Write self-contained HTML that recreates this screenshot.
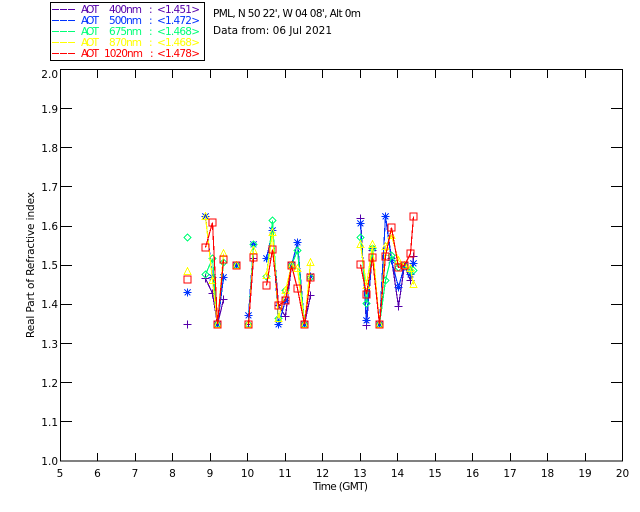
<!DOCTYPE html>
<html>
<head>
<meta charset="utf-8">
<style>
html,body{margin:0;padding:0;background:#fff;width:640px;height:512px;overflow:hidden}
svg{display:block}
text{font-family:"DejaVu Sans","Liberation Sans",sans-serif;font-size:10.5px;fill:#000}
</style>
</head>
<body>
<svg id="s" xmlns="http://www.w3.org/2000/svg" width="640" height="512" viewBox="0 0 640 512">
<g shape-rendering="crispEdges" fill="none" stroke="#000" stroke-width="1">
<rect x="50.5" y="2.5" width="154" height="58"/>
<rect x="60.5" y="69.5" width="562" height="391.5"/>
<path id="ticks" d=""/>
</g>
<g shape-rendering="crispEdges" fill="none" stroke-width="1" stroke-dasharray="7 1">
<path d="M52 9.5H75" stroke="#5500aa"/>
<path d="M52 20.5H75" stroke="#0033ff"/>
<path d="M52 31.5H75" stroke="#00ff77"/>
<path d="M52 42.5H75" stroke="#ffff00"/>
<path d="M52 53.5H75" stroke="#ff0000"/>
</g>
<g>
<text x="81" y="13" textLength="18" style="fill:#5500aa">AOT</text><text x="109" y="13" textLength="33" style="fill:#5500aa">400nm</text><text x="149" y="13" style="fill:#5500aa">:</text><text x="157" y="13" textLength="43" style="fill:#5500aa">&lt;1.451&gt;</text>
<text x="81" y="24" textLength="18" style="fill:#0033ff">AOT</text><text x="109" y="24" textLength="33" style="fill:#0033ff">500nm</text><text x="149" y="24" style="fill:#0033ff">:</text><text x="157" y="24" textLength="43" style="fill:#0033ff">&lt;1.472&gt;</text>
<text x="81" y="35" textLength="18" style="fill:#00ff77">AOT</text><text x="109" y="35" textLength="33" style="fill:#00ff77">675nm</text><text x="149" y="35" style="fill:#00ff77">:</text><text x="157" y="35" textLength="43" style="fill:#00ff77">&lt;1.468&gt;</text>
<text x="81" y="46" textLength="18" style="fill:#ffff00">AOT</text><text x="109" y="46" textLength="33" style="fill:#ffff00">870nm</text><text x="149" y="46" style="fill:#ffff00">:</text><text x="157" y="46" textLength="43" style="fill:#ffff00">&lt;1.468&gt;</text>
<text x="81" y="57" textLength="18" style="fill:#ff0000">AOT</text><text x="104" y="57" textLength="39" style="fill:#ff0000">1020nm</text><text x="150" y="57" style="fill:#ff0000">:</text><text x="157" y="57" textLength="43" style="fill:#ff0000">&lt;1.478&gt;</text>
<text x="213" y="17" textLength="148">PML, N 50 22', W 04 08', Alt 0m</text>
<text x="213" y="34" textLength="119">Data from: 06 Jul 2021</text>
<text x="313" y="490" textLength="55">Time (GMT)</text>
<text transform="translate(34 338) rotate(-90)" textLength="146">Real Part of Refractive index</text>
</g>
<g id="yl" text-anchor="end"></g>
<g id="xl" text-anchor="middle"></g>
<g id="plot" fill="none" stroke-width="1" shape-rendering="crispEdges"></g>
</svg>
<script>
var NS="http://www.w3.org/2000/svg",d="",i;
function T(p,x,y,t){var e=document.createElementNS(NS,"text");e.setAttribute("x",x);e.setAttribute("y",y);e.textContent=t;document.getElementById(p).appendChild(e);}
for(i=0;i<=15;i++){var x=Math.floor(60+i*37.5)+.5;if(i>0&&i<15)d+="M"+x+" 69V78M"+x+" 461V453";T("xl",60+i*37.5,477,String(5+i));}
for(i=0;i<=10;i++){var yy=461-i*39.15,y=Math.floor(yy)+.5;if(i>0&&i<10)d+="M60 "+y+"H72M622 "+y+"H611";T("yl",58,Math.round(yy)+(i==10?8:4),(1+i/10).toFixed(1));}
document.getElementById("ticks").setAttribute("d",d);
var X=[187,205,212,217,223,236,248,253,266,272,278,285,291,297,304,310,360,366,372,379,385,391,398,404,410,413];
var G=[[0,0],[1,4],[5,5],[6,7],[8,15],[16,25]];
var S=[
{c:"#5500aa",m:"plus",y:[324,278,293,324,299,265,324,258,258,230,305,316,265,242,324,295,218,325,250,324,216,258,306,265,280,256]},
{c:"#0033ff",m:"star",y:[292,216,277,324,277,265,315,244,258,230,324,300,265,242,324,276,223,320,248,324,216,260,287,265,274,263]},
{c:"#00ff77",m:"dia",y:[237,274,258,324,262,265,324,244,276,220,318,290,265,250,324,277,237,303,248,324,280,255,267,265,270,270]},
{c:"#ffff00",m:"tri",y:[271,216,280,324,253,265,324,250,275,232,318,290,265,268,324,262,244,285,244,324,246,235,260,265,268,284]},
{c:"#ff0000",m:"sq",y:[279,247,222,324,259,265,324,257,285,249,305,300,265,288,324,277,264,294,257,324,256,227,267,265,253,216]}];
var M={
plus:function(x,y){return "M"+(x-4)+" "+y+"H"+(x+4)+"M"+x+" "+(y-4)+"V"+(y+4);},
star:function(x,y){return "M"+(x-4)+" "+y+"H"+(x+4)+"M"+x+" "+(y-4)+"V"+(y+4)+"M"+(x-3)+" "+(y-3)+"L"+(x+3)+" "+(y+3)+"M"+(x-3)+" "+(y+3)+"L"+(x+3)+" "+(y-3);},
dia:function(x,y){return "M"+x+" "+(y-3.5)+"L"+(x+3.5)+" "+y+"L"+x+" "+(y+3.5)+"L"+(x-3.5)+" "+y+"Z";},
tri:function(x,y){return "M"+x+" "+(y-4)+"L"+(x+3.5)+" "+(y+3)+"H"+(x-3.5)+"Z";},
sq:function(x,y){return "M"+(x-3.5)+" "+(y-3.5)+"H"+(x+3.5)+"V"+(y+3.5)+"H"+(x-3.5)+"Z";}};
var plot=document.getElementById("plot");
S.forEach(function(s){
 var l="",m="";
 G.forEach(function(g){for(var k=g[0];k<=g[1];k++)l+=(k==g[0]?"M":"L")+(X[k]+.5)+" "+(s.y[k]+.5);});
 X.forEach(function(x,k){m+=M[s.m](x+.5,s.y[k]+.5);});
 var a=document.createElementNS(NS,"path");a.setAttribute("d",l);a.setAttribute("stroke",s.c);a.setAttribute("stroke-width","1.2");plot.appendChild(a);
 var b=document.createElementNS(NS,"path");b.setAttribute("d",m);b.setAttribute("stroke",s.c);b.setAttribute("stroke-width","1");plot.appendChild(b);
});
</script>
</body>
</html>
